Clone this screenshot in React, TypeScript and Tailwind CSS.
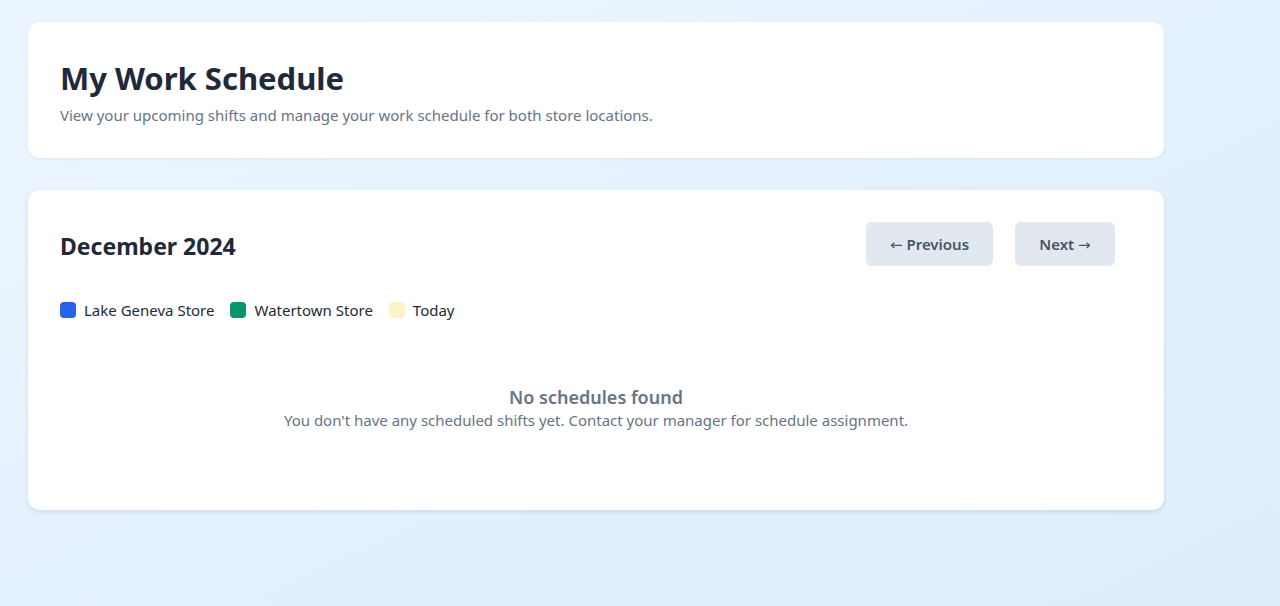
const legend = [
  { id: "lg", label: "Lake Geneva Store", color: "bg-[#2563eb]" },
  { id: "wt", label: "Watertown Store", color: "bg-[#059669]" },
  { id: "today", label: "Today", color: "bg-[#fef3c7]" },
];

export default function App() {
  return (
    <div className="min-h-[606px] bg-gradient-to-br from-[#ebf5fe] to-[#ddeefc] font-['Noto_Sans',sans-serif] pl-[28px] pt-[22px] pb-10">
      <div className="w-[1136px]">
        {/* Header card */}
        <div className="bg-white rounded-xl px-8 py-8 shadow-[0_1px_3px_rgba(15,23,42,0.06)]">
          <h1 className="text-[31px] leading-[48px] font-bold text-[#1e293b]">My Work Schedule</h1>
          <p className="mt-[2px] text-[15px] leading-[22px] text-[#64748b]">
            View your upcoming shifts and manage your work schedule for both store locations.
          </p>
        </div>

        {/* Calendar card */}
        <div className="mt-8 bg-white rounded-xl p-8 shadow-[0_2px_4px_rgba(15,23,42,0.1)]">
          <div className="flex items-center justify-between">
            <h2 className="text-[23px] font-bold text-[#1e293b] pt-1">December 2024</h2>
            <div className="flex gap-[22px] mr-[17px]">
              <button className="h-[44px] w-[127px] rounded-md bg-[#e2e8f0] text-[15px] font-semibold text-[#475569] pt-[2px]">
                <span className="font-['DejaVu_Sans',sans-serif] font-normal">←</span> Previous
              </button>
              <button className="h-[44px] w-[100px] rounded-md bg-[#e2e8f0] text-[15px] font-semibold text-[#475569] pt-[2px]">
                Next <span className="font-['DejaVu_Sans',sans-serif] font-normal">→</span>
              </button>
            </div>
          </div>

          <div className="mt-[33px] flex items-center gap-4">
            {legend.map((l) => (
              <div key={l.id} className="flex items-center gap-2">
                <span className={`w-4 h-4 rounded ${l.color}`} />
                <span className="text-[15px] leading-[22px] text-[#1e293b]">{l.label}</span>
              </div>
            ))}
          </div>

          <div className="mt-[15px] py-12 text-center">
            <p className="text-[18px] leading-[27px] font-semibold text-[#64748b]">No schedules found</p>
            <p className="text-[15px] leading-[19px] text-[#64748b]">
              You don't have any scheduled shifts yet. Contact your manager for schedule assignment.
            </p>
          </div>
        </div>
      </div>
    </div>
  );
}
